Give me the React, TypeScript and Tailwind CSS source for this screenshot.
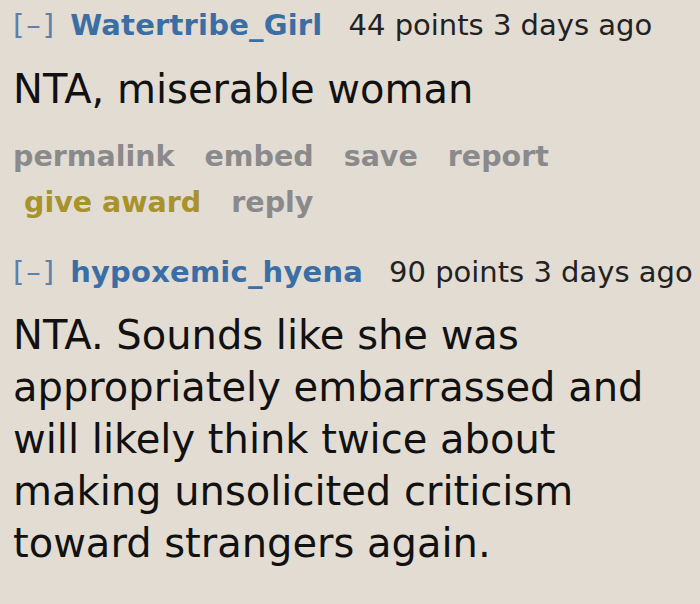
import React from 'react';

interface Comment {
  author: string;
  points: number;
  age: string;
  body: string[];
}

const comments: Comment[] = [
  {
    author: 'Watertribe_Girl',
    points: 44,
    age: '3 days ago',
    body: ['NTA, miserable woman'],
  },
  {
    author: 'hypoxemic_hyena',
    points: 90,
    age: '3 days ago',
    body: [
      'NTA. Sounds like she was',
      'appropriately embarrassed and',
      'will likely think twice about',
      'making unsolicited criticism',
      'toward strangers again.',
    ],
  },
];

function Tagline({ c }: { c: Comment }) {
  return (
    <div className="flex items-baseline text-[29px] leading-[34px] whitespace-nowrap">
      <span className="text-[#5d80ac] tracking-[2px] mr-[14px]">[–]</span>
      <span className="font-bold text-[#3a6ea5] tracking-[0.2px] mr-[26px]">{c.author}</span>
      <span className="text-[#222]">
        {c.points} points {c.age}
      </span>
    </div>
  );
}

function Buttons() {
  return (
    <div className="flex flex-col text-[28.5px] leading-[46px] font-bold text-[#8a8a8c] whitespace-nowrap">
      <div className="flex gap-[30px]">
        <span>permalink</span>
        <span>embed</span>
        <span>save</span>
        <span>report</span>
      </div>
      <div className="flex gap-[30px] pl-[11px]">
        <span className="text-[#a8922a]">give award</span>
        <span>reply</span>
      </div>
    </div>
  );
}

export default function App() {
  return (
    <div
      className="w-[700px] h-[604px] overflow-hidden bg-[#e2dcd3] pl-[13px]"
      style={{ fontFamily: '"DejaVu Sans", Verdana, sans-serif' }}
    >
      <div className="pt-[8px]">
        <Tagline c={comments[0]} />
        <div className="text-[40px] leading-[52px] text-[#111] mt-[21px] whitespace-nowrap">
          {comments[0].body[0]}
        </div>
        <div className="mt-[19px]">
          <Buttons />
        </div>
      </div>
      <div className="mt-[29px]">
        <Tagline c={comments[1]} />
        <div className="text-[40px] leading-[52px] text-[#111] mt-[20px] whitespace-nowrap">
          {comments[1].body.map((line) => (
            <div key={line}>{line}</div>
          ))}
        </div>
      </div>
    </div>
  );
}
